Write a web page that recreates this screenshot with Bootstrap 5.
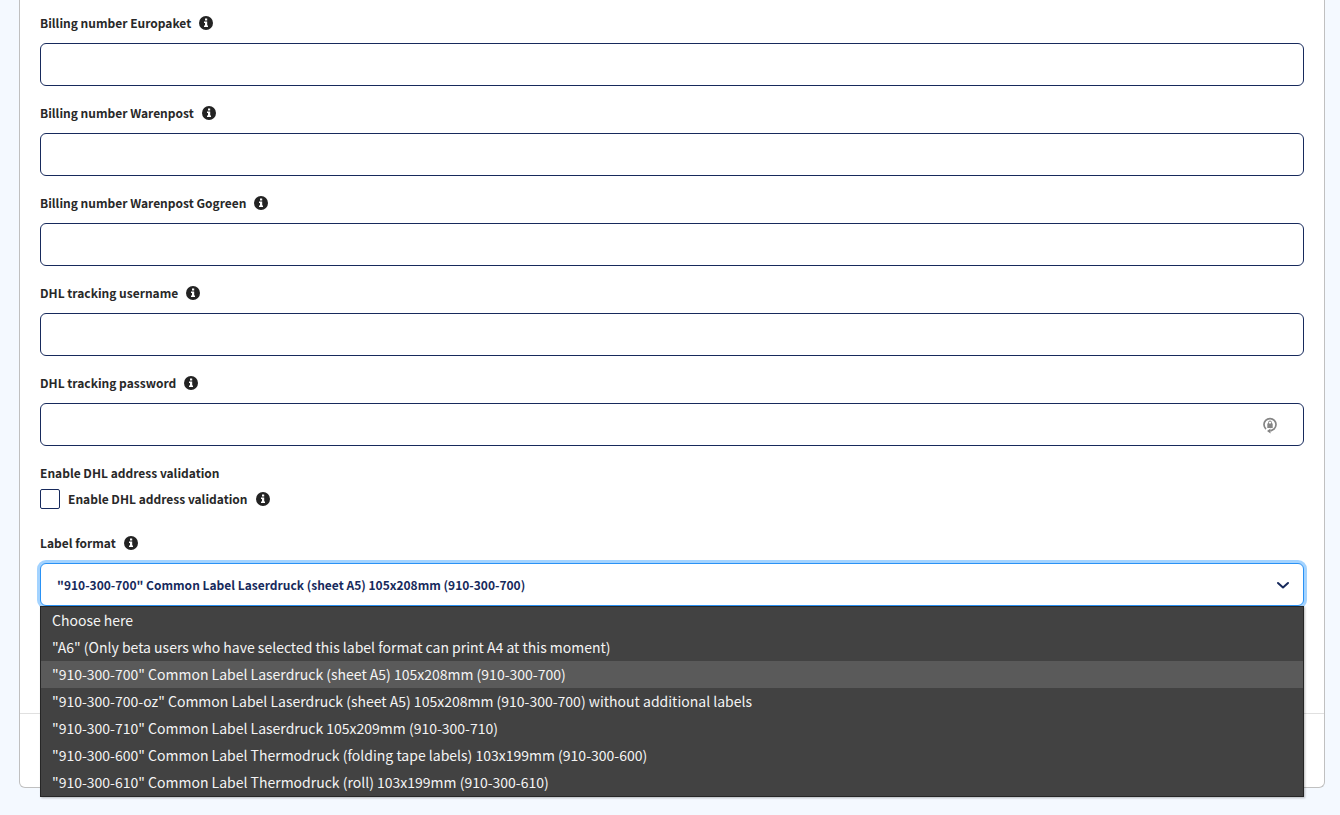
<!DOCTYPE html>
<html lang="en">
<head>
<meta charset="utf-8">
<meta name="viewport" content="width=device-width, initial-scale=1">
<title>DHL settings</title>
<link href="https://cdn.jsdelivr.net/npm/bootstrap@5.3.0/dist/css/bootstrap.min.css" rel="stylesheet">
<style>
  body { background: #f4f9ff; color: #282828; font: 700 12px/20px "Noto Sans CJK SC", "Open Sans", sans-serif; }
  .page { padding: 0 15px 27px 19px; }
  .settings { background: #fff; border: 1px solid #c0c0c0; border-top: 0; border-radius: 0 0 6px 6px; }
  .fields { padding: 13px 20px 107px; }
  .field { margin-bottom: 17px; }
  .caption { display: flex; align-items: center; gap: 8px; margin-bottom: 10px; }
  .info { width: 14px; height: 14px; flex: none; }
  .field .form-control, .field .form-select { height: 43px; border: 1px solid #172a5c; border-radius: 6px; padding: 0 16px; color: #172a5c; font-size: 12px; font-weight: 700; line-height: 20px; }
  .field .form-select { border-color: #2a92f5; box-shadow: 0 0 0 3px #a3d3ff; background-image: none; }
  .chevron { position: absolute; right: 14px; top: 15px; pointer-events: none; }
  .keeper { position: absolute; right: 27px; top: 14px; }
  .validation { padding-top: 1px; margin-bottom: 24px; }
  .validation legend { float: none; margin: 0 0 5px; font-size: 12px; line-height: 20px; }
  .form-check-input.tick { width: 20px; height: 20px; margin: 0; border: 1px solid #172a5c; border-radius: 2px; flex: none; }
  .options { position: absolute; top: 43px; left: 0; right: 0; z-index: 5; background: #424242; border: 1px solid #262626; color: #f4f4f4; box-shadow: 1px 1px 2px #0004; font: 400 14px/27px "Noto Sans CJK SC", "Noto Sans", sans-serif; }
  .options li { padding: 0 11px; }
  .options li[aria-selected=true] { background: #5a5a5a; }
  .actions { height: 74px; border-top: 1px solid #e0e0e0; }
</style>
</head>
<body>
<svg class="d-none" aria-hidden="true">
  <symbol id="info" viewBox="0 0 14 14"><circle cx="7" cy="7" r="7" fill="#232323"/><path d="M6 2.500h2.200v2H6zM5 5.500h3.200v4H9V11H5V9.500h1V7H5z" fill="#fff"/></symbol>
</svg>
<main class="page">
<form class="settings">
  <div class="fields">
    <div class="field"><div class="caption"><label for="europaket">Billing number Europaket</label><svg class="info"><use href="#info"/></svg></div><input class="form-control" id="europaket" type="text"></div>
    <div class="field"><div class="caption"><label for="warenpost">Billing number Warenpost</label><svg class="info"><use href="#info"/></svg></div><input class="form-control" id="warenpost" type="text"></div>
    <div class="field"><div class="caption"><label for="gogreen">Billing number Warenpost Gogreen</label><svg class="info"><use href="#info"/></svg></div><input class="form-control" id="gogreen" type="text"></div>
    <div class="field"><div class="caption"><label for="username">DHL tracking username</label><svg class="info"><use href="#info"/></svg></div><input class="form-control" id="username" type="text"></div>
    <div class="field"><div class="caption"><label for="password">DHL tracking password</label><svg class="info"><use href="#info"/></svg></div>
      <div class="position-relative"><input class="form-control" id="password" type="password">
        <svg class="keeper" width="14" height="17" viewBox="0 0 14 17" fill="none" stroke="#858585"><path d="M3 12A6 6 0 1 1 11 12L7.500 14" stroke-width="1.700"/><path d="M5.500 7V5.500a1.500 1.500 0 0 1 3 0V7"/><path d="M4.300 6.500h5.400v4.500H4.300z" fill="#858585" stroke="none"/><path d="M7.500 11.500v5L4 14z" fill="#858585" stroke="none"/></svg>
      </div></div>
    <fieldset class="validation"><legend>Enable DHL address validation</legend>
      <div class="d-flex align-items-center"><input class="form-check-input tick" id="validate" type="checkbox"><label class="ms-2" for="validate">Enable DHL address validation</label><svg class="info ms-2"><use href="#info"/></svg></div>
    </fieldset>
    <div><div class="caption"><label for="format">Label format</label><svg class="info"><use href="#info"/></svg></div>
      <div class="field position-relative mb-0">
        <select class="form-select" id="format"><option>"910-300-700" Common Label Laserdruck (sheet A5) 105x208mm (910-300-700)</option></select>
        <svg class="chevron" width="14" height="14" viewBox="0 0 14 14" fill="none" stroke="#172a5c" stroke-width="2"><path d="M2 5l5 4.500L12 5" stroke-linecap="round" stroke-linejoin="round"/></svg>
        <ul class="options list-unstyled mb-0" role="listbox" aria-label="Label format">
          <li role="option">Choose here</li>
          <li role="option">"A6" (Only beta users who have selected this label format can print A4 at this moment)</li>
          <li role="option" aria-selected="true">"910-300-700" Common Label Laserdruck (sheet A5) 105x208mm (910-300-700)</li>
          <li role="option">"910-300-700-oz" Common Label Laserdruck (sheet A5) 105x208mm (910-300-700) without additional labels</li>
          <li role="option">"910-300-710" Common Label Laserdruck 105x209mm (910-300-710)</li>
          <li role="option">"910-300-600" Common Label Thermodruck (folding tape labels) 103x199mm (910-300-600)</li>
          <li role="option">"910-300-610" Common Label Thermodruck (roll) 103x199mm (910-300-610)</li>
        </ul>
      </div></div>
  </div>
  <div class="actions"></div>
</form>
</main>
<script src="https://cdn.jsdelivr.net/npm/bootstrap@5.3.0/dist/js/bootstrap.bundle.min.js"></script>
</body>
</html>
